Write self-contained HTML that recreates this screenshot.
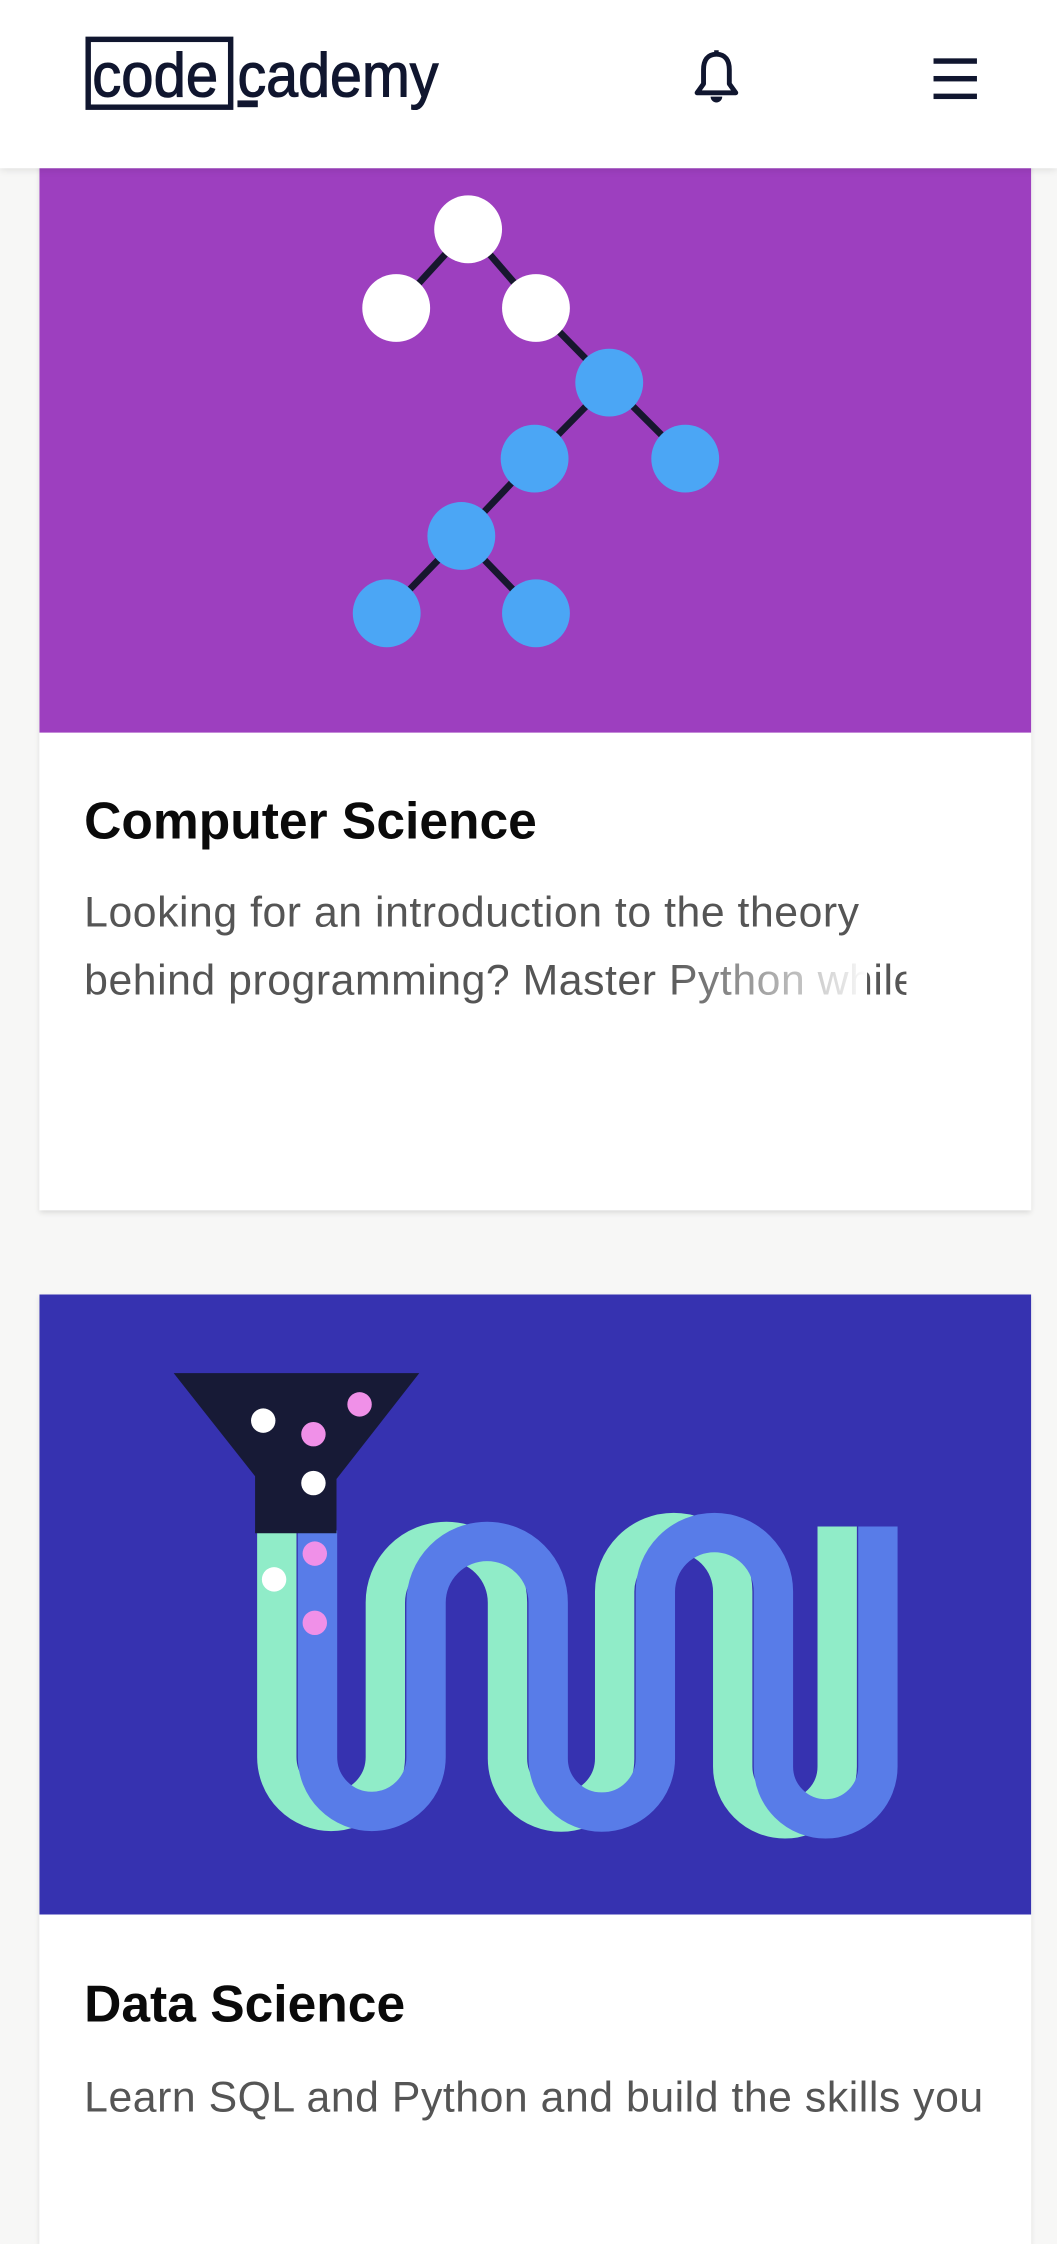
<!DOCTYPE html>
<html><head><meta charset="utf-8">
<style>
html,body{margin:0;padding:0;}
body{width:1057px;height:2128px;overflow:hidden;background:#f7f7f6;font-family:"Liberation Sans",sans-serif;}
#w{position:absolute;left:0;top:0;width:779px;height:1568px;transform:scale(1.35687);transform-origin:0 0;}
.card{position:absolute;left:29px;width:731px;background:#fff;box-shadow:0 2px 4px rgba(0,0,0,0.12);}
.title{position:absolute;left:33px;font-size:38px;font-weight:bold;color:#0a0a0a;letter-spacing:0px;white-space:nowrap;}
.desc{position:absolute;left:33px;font-size:31.5px;color:#555;line-height:50px;white-space:nowrap;letter-spacing:0.4px;}
.hdr{position:absolute;left:0;top:0;width:779px;height:124px;background:#fff;box-shadow:0 1px 6px rgba(0,0,0,0.12);z-index:5;}
.logo{position:absolute;font-size:46px;line-height:46px;color:#10162f;-webkit-text-stroke:0.8px #10162f;white-space:nowrap;transform-origin:0 0;}
</style></head><body><div id="w">

<div class="card" style="top:80px;height:812px;">
<svg width="731" height="460" style="position:absolute;left:0;top:0" viewBox="29 80 731 460">
<rect x="29" y="80" width="731" height="460" fill="#9d3fbf"/>
<g stroke="#17172e" stroke-width="5">
<line x1="345" y1="169" x2="292" y2="227"/><line x1="345" y1="169" x2="395" y2="227"/>
<line x1="395" y1="227" x2="449" y2="282"/><line x1="449" y1="282" x2="505" y2="338"/>
<line x1="449" y1="282" x2="394" y2="338"/><line x1="394" y1="338" x2="340" y2="395"/>
<line x1="340" y1="395" x2="285" y2="452"/><line x1="340" y1="395" x2="395" y2="452"/>
</g>
<g fill="#fff"><circle cx="345" cy="169" r="25"/><circle cx="292" cy="227" r="25"/><circle cx="395" cy="227" r="25"/></g>
<g fill="#4ba6f5"><circle cx="449" cy="282" r="25"/><circle cx="505" cy="338" r="25"/><circle cx="394" cy="338" r="25"/><circle cx="340" cy="395" r="25"/><circle cx="285" cy="452" r="25"/><circle cx="395" cy="452" r="25"/></g>
</svg>
<div class="title" style="top:505px;">Computer Science</div>
<div class="desc" style="top:567px;">Looking for an introduction to the theory</div>
<div class="desc" style="top:617px;width:606px;overflow:hidden;">behind programming? Master Python while</div>
<div style="position:absolute;left:460px;top:620px;width:150px;height:50px;background:linear-gradient(to right,rgba(255,255,255,0),rgba(255,255,255,0.85) 90%,#fff);"></div>
</div>

<div class="card" style="top:954px;height:700px;">
<svg width="731" height="457" style="position:absolute;left:0;top:0" viewBox="29 954 731 457">
<rect x="29" y="954" width="731" height="457" fill="#3632b0"/>
<g fill="none" stroke-width="29">
<path transform="translate(-30,0)" stroke="#90ecc8" d="M234 1128 V1295 A40 40 0 0 0 314 1295 V1181 A45 45 0 0 1 404 1181 V1296 A39.5 39.5 0 0 0 483 1296 V1173 A43.5 43.5 0 0 1 570 1173 V1302 A38.5 38.5 0 0 0 647 1302 V1125"/>
<path stroke="#587ce8" d="M234 1128 V1295 A40 40 0 0 0 314 1295 V1181 A45 45 0 0 1 404 1181 V1296 A39.5 39.5 0 0 0 483 1296 V1173 A43.5 43.5 0 0 1 570 1173 V1302 A38.5 38.5 0 0 0 647 1302 V1125"/>
</g>
<path d="M128 1012 H309 L248 1090 V1130 H188 V1088 Z" fill="#171a36"/>
<g fill="#fff"><circle cx="194" cy="1047" r="9"/><circle cx="231" cy="1093" r="9"/><circle cx="202" cy="1164" r="9"/></g>
<g fill="#f090e8"><circle cx="231" cy="1057" r="9"/><circle cx="265" cy="1035" r="9"/><circle cx="232" cy="1145" r="9"/><circle cx="232" cy="1196" r="9"/></g>
</svg>
<div class="title" style="top:503px;">Data Science</div>
<div class="desc" style="top:566px;">Learn SQL and Python and build the skills you</div>
</div>

<div class="hdr">
<div style="position:absolute;left:63px;top:27px;width:101px;height:46px;border:4px solid #10162f;"></div>
<div class="logo" style="left:68px;top:32px;transform:scaleX(0.93);">code</div>
<div class="logo" style="left:175px;top:32px;transform:scaleX(0.92);">cademy</div>
<div style="position:absolute;left:175px;top:74px;width:15px;height:5px;background:#10162f;"></div>
<svg style="position:absolute;left:509px;top:36px" width="38" height="42" viewBox="0 0 40 44">
<path d="M20 4 C13 4 10 9 10 16 V27 L5 34 H35 L30 27 V16 C30 9 27 4 20 4 Z" fill="none" stroke="#10162f" stroke-width="3.8" stroke-linejoin="round"/>
<path d="M20 1 V5" stroke="#10162f" stroke-width="3.5"/>
<path d="M15.5 37 A4.5 4.5 0 0 0 24.5 37 Z" fill="#10162f"/>
</svg>
<div style="position:absolute;left:688px;top:43px;width:32px;height:3.5px;background:#10162f;"></div>
<div style="position:absolute;left:688px;top:56px;width:32px;height:3.5px;background:#10162f;"></div>
<div style="position:absolute;left:688px;top:69px;width:32px;height:3.5px;background:#10162f;"></div>
</div>

</div></body></html>
